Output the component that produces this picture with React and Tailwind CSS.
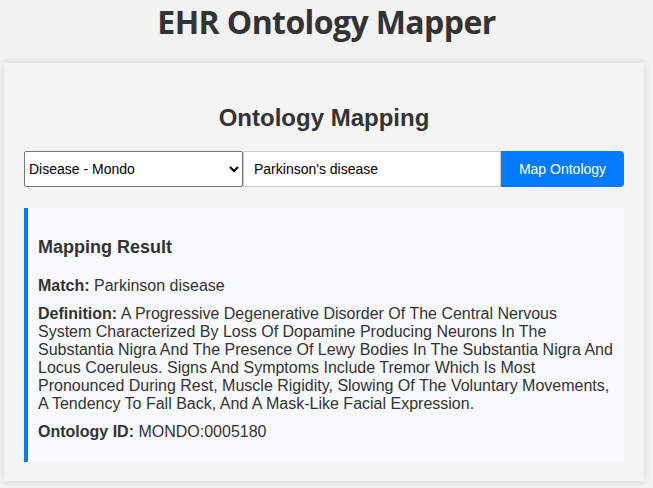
import React, { useState } from 'react';

const App = () => {
  const [ontology, setOntology] = useState('mondo');
  const [term, setTerm] = useState("Parkinson's disease");

  return (
    <div className="min-h-[488px] bg-[#f2f2f2] text-[#333] font-['Liberation_Sans',Arial,sans-serif]">
      <h1 className="pt-[2px] text-center text-[32px] leading-[40px] font-bold font-['Open_Sans','Noto_Sans',sans-serif] tracking-[-0.6px]">
        EHR Ontology Mapper
      </h1>

      <div className="mt-[21px] ml-[4px] w-[640px] bg-[#f4f4f4] px-[20px] pt-[41px] pb-[19px] shadow-[0_0_8px_rgba(0,0,0,0.1)]">
        <h2 className="text-center text-[24px] leading-[28px] font-bold">Ontology Mapping</h2>

        <div className="mt-[19px] flex h-[36px]">
          <select
            value={ontology}
            onChange={(e) => setOntology(e.target.value)}
            className="w-[219px] border border-[#767676] bg-white px-0 text-[14px] text-black rounded-[2px]"
          >
            <option value="mondo">Disease - Mondo</option>
            <option value="hpo">Phenotype - HPO</option>
          </select>
          <input
            type="text"
            value={term}
            onChange={(e) => setTerm(e.target.value)}
            className="w-[258px] border border-[#ccc] bg-white px-[10px] text-[14px] text-black outline-none"
          />
          <button className="w-[123px] rounded-r-[4px] bg-[#007bff] text-[14px] text-white">
            Map Ontology
          </button>
        </div>

        <div className="mt-[21px] border-l-4 border-[#007bff] bg-[#f8f9fa] pl-[10px] pr-[10px] pt-[28px] pb-[21px] text-[16px] leading-[18px]">
          <h3 className="text-[18px] leading-[22px] font-bold">Mapping Result</h3>
          <p className="mt-[19px]">
            <strong>Match:</strong> Parkinson disease
          </p>
          <p className="mt-[10px]">
            <strong>Definition:</strong> A Progressive Degenerative Disorder Of The Central Nervous System Characterized By Loss Of Dopamine Producing Neurons In The Substantia Nigra And The Presence Of Lewy Bodies In The Substantia Nigra And Locus Coeruleus. Signs And Symptoms Include Tremor Which Is Most Pronounced During Rest, Muscle Rigidity, Slowing Of The Voluntary Movements, A Tendency To Fall Back, And A Mask-Like Facial Expression.
          </p>
          <p className="mt-[10px]">
            <strong>Ontology ID:</strong> MONDO:0005180
          </p>
        </div>
      </div>
    </div>
  );
};

export default App;
